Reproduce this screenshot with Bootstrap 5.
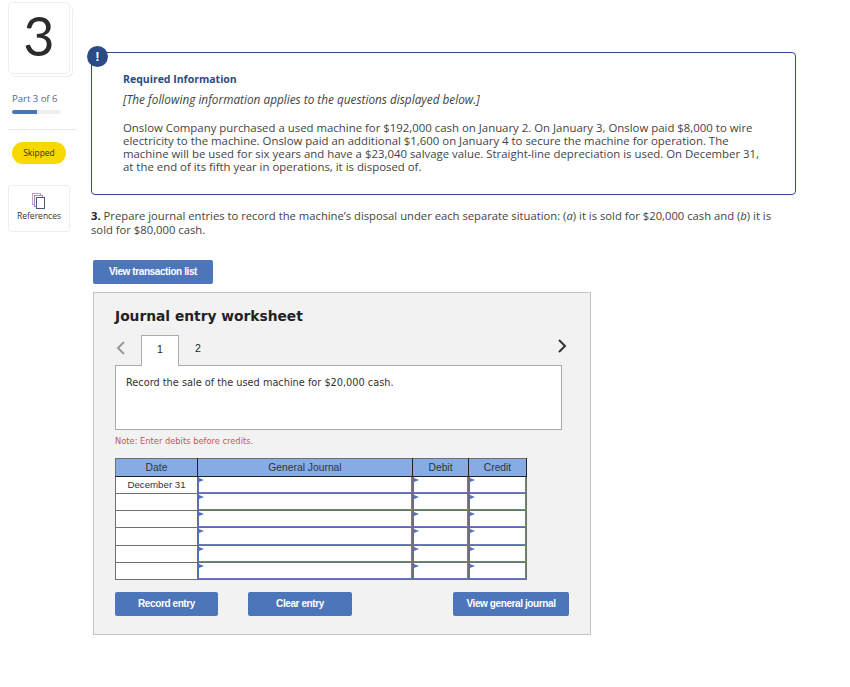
<!DOCTYPE html>
<html lang="en"><head><meta charset="utf-8"><title>Journal entry worksheet</title>
<link href="https://cdn.jsdelivr.net/npm/bootstrap@5.3.0/dist/css/bootstrap.min.css" rel="stylesheet">
<style>
body{background:#fff;color:#333;font-family:"Open Sans","Liberation Sans",sans-serif;width:850px;height:687px;overflow:hidden}
.shell{padding:2px 0 0 8px}
.side{width:63px;flex:none}
.numcard{width:62px;height:72px;border:1px solid #eee;border-radius:5px;box-shadow:2px 2px 0 #fff,3px 3px 0 #eee;font-size:54px;line-height:66px;text-align:center;color:#2b2b2b;font-weight:400;font-family:"Lato",sans-serif}
.partlbl{font-size:9.5px;color:#666;margin-top:18px;margin-left:4px;line-height:14px}
.partlbl b{font-weight:400;color:#3f68a8}
.prog{width:49px;height:4px;background:#eee;border-radius:2px;margin:4px 0 0 4px;overflow:hidden}
.prog i{display:block;height:4px;background:#4a76b8}
.hrule{height:1px;background:#e8e8e8;margin:15px 0 0 0;width:68px}
.skip{width:54px;height:22px;margin:12px 0 0 4px;background:#f7d900;border-radius:11px;font-size:8.5px;line-height:22px;text-align:center;color:#333}
.refs{width:62px;height:47px;border:1px solid #eee;border-radius:3px;margin-top:21px;text-align:center;font-size:8.5px;color:#333;padding-top:7px;line-height:12px}
.refs svg{display:block;margin:0 auto}
.mainc{margin-left:20px;width:705px}
.infobox{margin-top:50px;width:705px;height:143px;border:1.5px solid #2c4a85;border-radius:4px;padding:20px 31px 0;font-size:11.4px;line-height:13px;position:relative;color:#444;white-space:nowrap}
.bang{position:absolute;left:-5px;top:-7px;width:21px;height:21px;border-radius:50%;background:#2c4a85;color:#fff;font:bold 13px/21px "Liberation Sans",sans-serif;text-align:center}
.infohead{color:#2c4a85;font-weight:700;font-size:10.5px;margin-bottom:7px}
.infoital{font-style:italic;font-size:11.8px;margin-bottom:15px}
.qtext{font-size:11.25px;line-height:14px;margin-top:14px;color:#444;width:690px}
.qtext b{color:#222}
.bluebtn{background:#4d75b9;color:#fff;border:0;border-radius:2px;font:bold 10px/24px "Liberation Sans",sans-serif;letter-spacing:-.4px;padding:0;height:24px;text-align:center}
.bluebtn:hover{background:#4d75b9;color:#fff}
.b120{width:120px;margin:23px 0 0 2px;display:block}
.sheet{width:498px;height:343px;margin:8px 0 0 2px;background:#f2f2f2;border:1px solid #c4c4c4;padding:0 21px}
.sheet h2{font:bold 13.8px/18px "DejaVu Sans",sans-serif;color:#222;margin:14px 0 10px;letter-spacing:0}
.tabsrow{height:31px;align-items:flex-end;position:relative}
.tabsrow .chev{width:26px;height:32px;flex:none}
.tabon,.taboff{width:38px;height:31px;font:10.5px/27px "Liberation Sans",sans-serif;text-align:center;color:#222}
.tabon{background:#fff;border:1px solid #aaa;border-bottom:0;position:relative;z-index:1}
.nextc{margin-left:auto;margin-right:1px;height:33px}
.nextc svg{display:block}
.promptbox{width:447px;height:65px;background:#fff;border:1px solid #aaa;font:9.75px/16px "DejaVu Sans",sans-serif;color:#333;padding:9px 10px;margin-top:-1px}
.notec{font:8.3px/10px "DejaVu Sans",sans-serif;color:#bd5a5a;margin:6px 0 12px}
.jt{border-collapse:collapse;table-layout:fixed;width:411px;font:9.7px/12px "Liberation Sans",sans-serif;color:#333}
.jt th,.jt td{border:1px solid #6f6f6f;padding:0;background:#fff}
.jt th{background:#86ace5;height:18px;font-weight:400;font-size:10.3px;text-align:center;border-bottom:1px solid #222;border-right-color:#222}
.jt td{height:17px;text-align:center}
.jt tr.tallrow td{height:18px}
.jt td.ent{position:relative;border:1px solid #6f6f6f;box-shadow:inset 1px 0 0 #4d75b9,inset 0 -1px 0 #5f82bd,inset -1px 0 0 #5f82bd}
.jt td.ent:after{content:"";position:absolute;left:1px;top:1px;border-left:5px solid #4d75b9;border-top:2.5px solid transparent;border-bottom:2.5px solid transparent}
.btnrow{margin-top:12px;width:454px}
.b103{width:103px}.b104{width:104px;margin-left:30px}.b116{width:116px;margin-left:auto}
</style></head>
<body>
<div class="shell d-flex">
 <div class="side">
  <div class="numcard">3</div>
  <div class="partlbl"><b>Part 3</b> of 6</div>
  <div class="prog"><i style="width:50%"></i></div>
  <div class="hrule"></div>
  <div class="skip">Skipped</div>
  <div class="refs">
   <svg width="14" height="17" viewBox="0 0 14 17" fill="none"><rect x=".5" y=".5" width="8" height="11" stroke="#c59ad0"/><rect x="2.5" y="2.5" width="8" height="11" stroke="#8e8ec8" fill="#fff"/><rect x="4.5" y="4.5" width="8" height="11" stroke="#557" fill="#fff"/></svg>
   References
  </div>
 </div>
 <div class="mainc">
  <div class="infobox">
   <div class="bang">!</div>
   <div class="infohead">Required Information</div>
   <div class="infoital">[The following information applies to the questions displayed below.]</div>
   <div>Onslow Company purchased a used machine for $192,000 cash on January 2. On January 3, Onslow paid $8,000 to wire<br>electricity to the machine. Onslow paid an additional $1,600 on January 4 to secure the machine for operation. The<br>machine will be used for six years and have a $23,040 salvage value. Straight-line depreciation is used. On December 31,<br>at the end of its fifth year in operations, it is disposed of.</div>
  </div>
  <div class="qtext"><b>3.</b> Prepare journal entries to record the machine’s disposal under each separate situation: (<i>a</i>) it is sold for $20,000 cash and (<i>b</i>) it is sold for $80,000 cash.</div>
  <button type="button" class="btn bluebtn b120">View transaction list</button>
  <div class="sheet">
   <h2>Journal entry worksheet</h2>
   <div class="d-flex tabsrow">
    <div class="chev"><svg width="12" height="16" viewBox="0 0 12 16" fill="none"><path d="M9 2 3 8l6 6" stroke="#999" stroke-width="2"/></svg></div>
    <div class="tabon">1</div><div class="taboff">2</div>
    <div class="nextc"><svg width="12" height="26" viewBox="0 0 12 26" fill="none"><path d="m3 7 6 6-6 6" stroke="#333" stroke-width="2"/></svg></div>
   </div>
   <div class="promptbox">Record the sale of the used machine for $20,000 cash.</div>
   <div class="notec">Note: Enter debits before credits.</div>
   <table class="jt">
    <colgroup><col style="width:82px"><col style="width:215px"><col style="width:56px"><col style="width:58px"></colgroup>
    <thead><tr><th>Date</th><th>General Journal</th><th>Debit</th><th>Credit</th></tr></thead>
    <tbody>
     <tr><td>December 31</td><td class="ent"></td><td class="ent"></td><td class="ent"></td></tr>
     <tr><td></td><td class="ent"></td><td class="ent"></td><td class="ent"></td></tr>
     <tr><td></td><td class="ent"></td><td class="ent"></td><td class="ent"></td></tr>
     <tr class="tallrow"><td></td><td class="ent"></td><td class="ent"></td><td class="ent"></td></tr>
     <tr><td></td><td class="ent"></td><td class="ent"></td><td class="ent"></td></tr>
     <tr><td></td><td class="ent"></td><td class="ent"></td><td class="ent"></td></tr>
    </tbody>
   </table>
   <div class="d-flex btnrow">
    <button type="button" class="btn bluebtn b103">Record entry</button>
    <button type="button" class="btn bluebtn b104">Clear entry</button>
    <button type="button" class="btn bluebtn b116">View general journal</button>
   </div>
  </div>
 </div>
</div>
</body></html>
